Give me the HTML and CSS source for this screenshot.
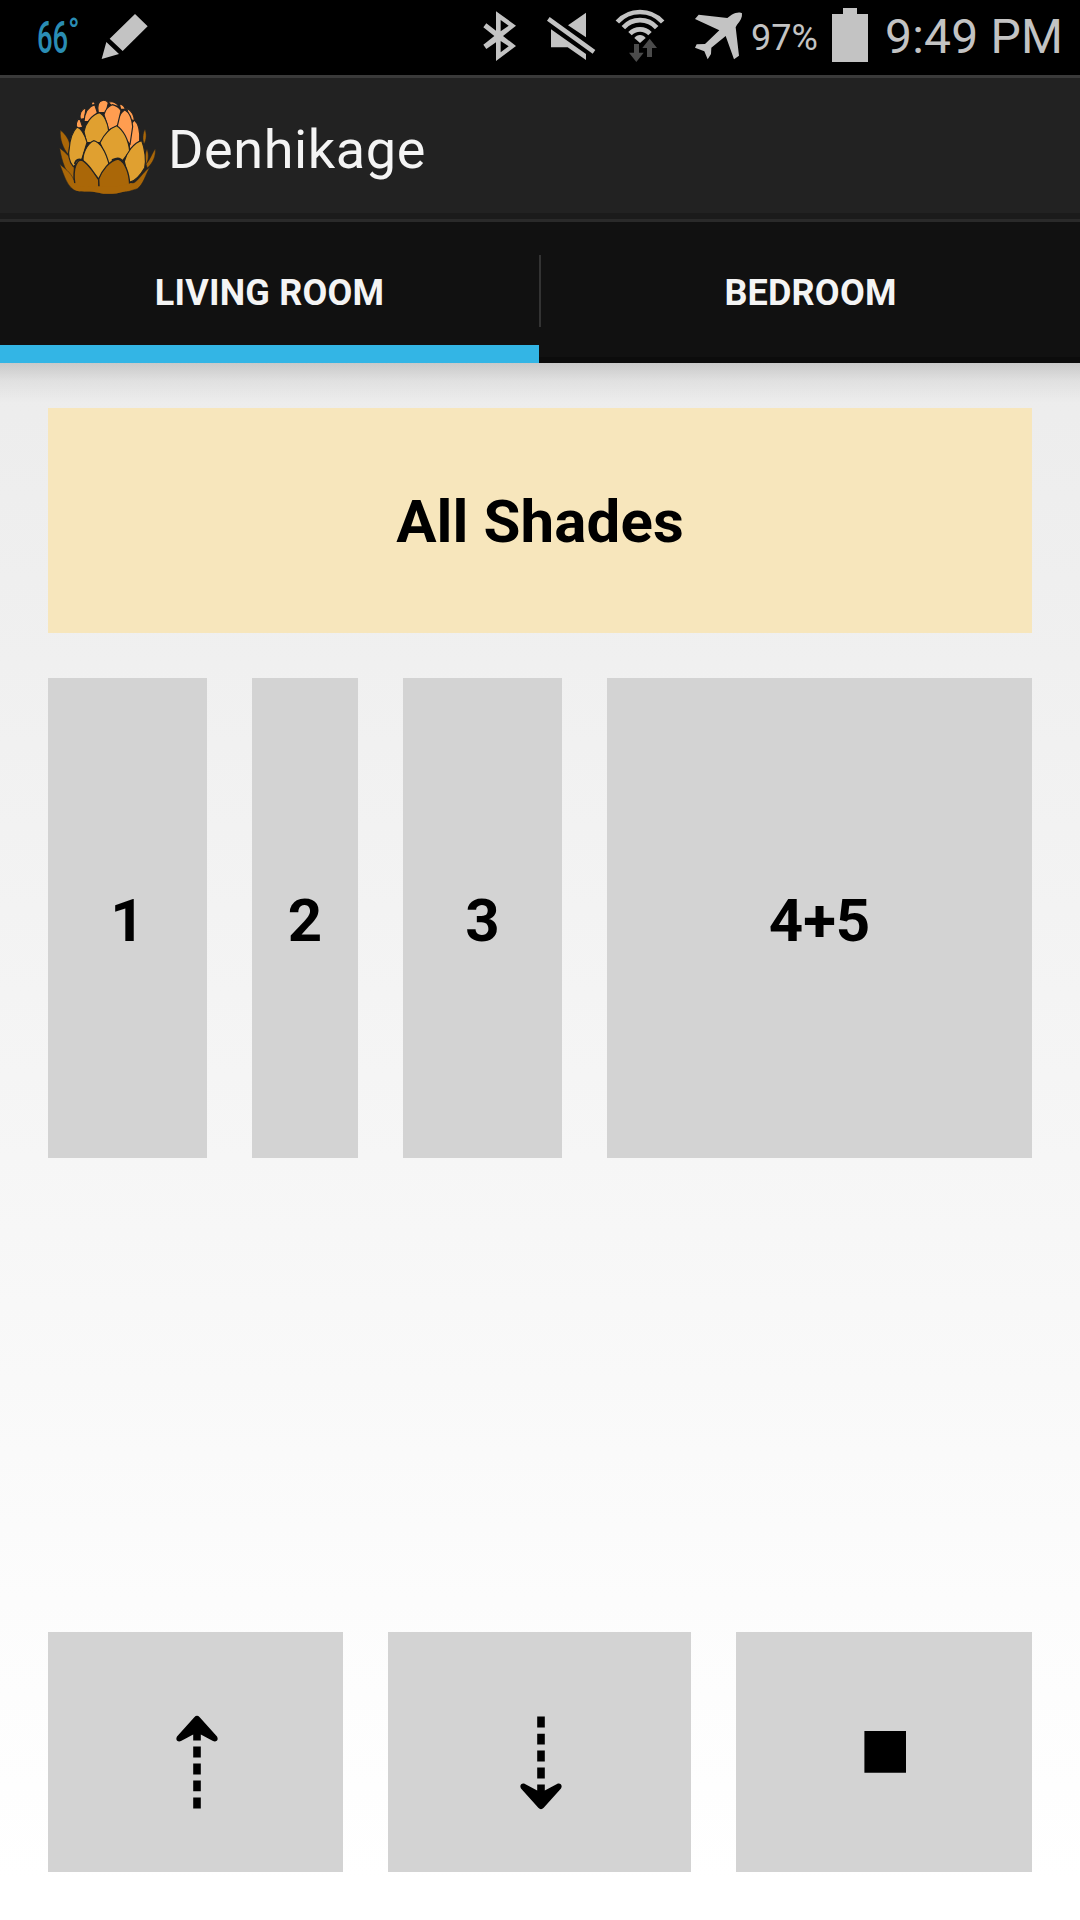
FILE: index.html
```html
<!DOCTYPE html>
<html lang="en">
<head>
<meta charset="utf-8">
<title>Denhikage</title>
<link rel="stylesheet" href="styles.css">
</head>
<body>
<div class="screen">
  <div class="status">
    <span class="temp">66</span><span class="degree">°</span>
    <svg class="pencil" viewBox="300 0 150 225"><path d="M405 42 443 79 368 153 329 116ZM319 126 357 162 305 177Z"/></svg>
    <svg class="bluetooth" viewBox="60 0 120 225"><path fill-rule="evenodd" d="M108 34 168 77 129 108 168 138 108 183V127L79 147 70 134 103 108 70 82 79 70 108 92ZM122 60V94L146 77ZM122 123V157L146 139Z"/></svg>
    <svg class="mute" viewBox="255 0 156 225"><path d="M378 38V112L324 76ZM273 88 378 162V180L323 142H273ZM269 51 406 150 398 161 261 62Z"/></svg>
    <svg class="wifi" viewBox="459 0 162 225">
      <g class="arcs"><path d="M472 66A92 92 0 0 1 608 66"/><path d="M490 83A67 67 0 0 1 590 83"/><path d="M510 101A41 41 0 0 1 570 101"/></g>
      <path d="M523 114A21 21 0 0 1 557 114L540 129Z"/>
      <path class="traffic" d="M522 132H537V158H551L529 186 507 158H522ZM569 116 591 144H576V171H561V144H547Z"/>
    </svg>
    <svg class="plane" viewBox="699 0 156 225"><path d="M846 40C847 52 842 63 831 74L827 82 837 167 822 178 797 108 754 143 753 162 743 178 733 154 705 143 710 133 735 132 778 91 705 57 716 44 802 54 815 44C828 36 842 36 846 40Z"/></svg>
    <span class="percent">97%</span>
    <svg class="battery" viewBox="0 0 36 75"><path d="M11 8H25V14H36V62H0V14H11Z"/></svg>
    <span class="clock">9:49 PM</span>
  </div>

  <header class="appbar">
    <svg class="logo" viewBox="50 48 312 300">
      <g class="leaf">
        <path d="M63 150C76 160 94 182 91 202L86 223C71 204 61 178 63 150Z"/>
        <path d="M61 204C76 216 104 238 104 262V304C80 280 67 244 61 204Z"/>
        <path d="M317 148C322 160 322 180 314 192 309 180 310 160 317 148Z"/>
        <path d="M323 207C329 222 328 242 320 253 315 240 317 220 323 207Z"/>
        <path d="M348 206C350 228 341 248 324 264L320 252C332 240 338 220 348 206Z"/>
        <path d="M61 252C76 266 92 274 104 300L268 316C300 306 305 280 332 262 318 284 312 314 294 326 275 332 270 334 250 336 228 343 195 343 178 338 155 332 130 337 112 332 84 326 74 284 61 252Z"/>
      </g>
      <g class="tip">
        <path d="M140 83C124 88 120 104 123 118L136 116Z"/>
        <path d="M121 115C110 122 109 136 113 145L130 142Z"/>
        <path d="M166 74C145 80 136 96 134 125H150L174 98Z"/>
        <path d="M156 67 164 65 168 73 158 76Z"/>
        <path d="M190 61C177 63 173 76 177 98H200L207 68C202 62 196 60 190 61Z"/>
        <path d="M207 67C218 63 230 68 238 78L220 80Z"/>
        <path d="M240 72C250 73 256 80 258 88L244 88Z"/>
        <path d="M262 84C276 92 285 106 285 123L270 116Z"/>
        <path d="M285 120C297 130 303 152 301 185L270 208V140Z"/>
        <path d="M256 89C269 96 278 115 280 140L272 194 232 142C232 116 242 99 256 89Z"/>
        <path d="M219 74C232 77 240 82 245 92L234 138 208 150 194 104C198 88 208 78 219 74Z"/>
      </g>
      <g class="petal">
        <path d="M180 98C194 104 205 126 208 152L182 188H142L134 155C138 130 157 105 180 98Z"/>
        <path d="M113 141C126 146 137 166 143 187L128 236 102 260C88 245 86 221 90 204 92 178 98 156 113 141Z"/>
        <path d="M232 137C251 149 268 178 271 214L248 244 210 256 182 188C193 165 210 145 232 137Z"/>
        <path d="M163 182C185 187 201 222 210 255L178 297 132 246C127 226 143 190 163 182Z"/>
        <path d="M307 182C317 208 321 242 316 263 303 286 287 303 270 307L255 244C262 218 283 188 307 182Z"/>
      </g>
      <g class="leaf front">
        <path d="M123 239C143 244 162 276 178 299L180 333 116 328C98 308 101 251 123 239Z"/>
        <path d="M237 237C257 246 270 278 271 314L258 334 180 336 178 297C188 272 210 241 237 237Z"/>
      </g>
      <path class="base" d="M108 308C125 328 155 318 180 319 210 321 250 320 274 309L295 312C285 330 265 334 250 336 228 343 195 343 178 338 155 332 130 337 112 332 103 330 97 323 92 315Z"/>
      <g class="vein"><path d="M107 250C110 240 118 236 126 240"/><path d="M220 240C232 234 244 235 250 245"/></g>
    </svg>
    <h1 class="title">Denhikage</h1>
  </header>

  <nav class="tabs">
    <a class="tab active"><span>LIVING ROOM</span></a>
    <i class="divider"></i>
    <a class="tab"><span>BEDROOM</span></a>
  </nav>

  <main class="content">
    <div class="tile all"><span class="label all-label">All Shades</span></div>
    <div class="shades">
      <div class="tile"><span class="label">1</span></div>
      <div class="tile"><span class="label">2</span></div>
      <div class="tile"><span class="label">3</span></div>
      <div class="tile"><span class="label">4+5</span></div>
    </div>
    <div class="controls">
      <div class="tile"><svg class="arrow" viewBox="0 0 44 96"><path d="M19.3 4.3Q22 1.4 24.7 4.3L42 23.5C44 27 41 29.5 38 28L25.8 21.5V27.5H18.2V21.5L6 28C3 29.5 0 27 2 23.5ZM18.2 33.5H25.8V44.5H18.2ZM18.2 50.5H25.8V61.5H18.2ZM18.2 67.5H25.8V78.3H18.2ZM18.2 84.5H25.8V95.5H18.2Z"/></svg></div>
      <div class="tile"><svg class="arrow down" viewBox="0 0 44 96"><path d="M19.3 4.3Q22 1.4 24.7 4.3L42 23.5C44 27 41 29.5 38 28L25.8 21.5V27.5H18.2V21.5L6 28C3 29.5 0 27 2 23.5ZM18.2 33.5H25.8V44.5H18.2ZM18.2 50.5H25.8V61.5H18.2ZM18.2 67.5H25.8V78.3H18.2ZM18.2 84.5H25.8V95.5H18.2Z"/></svg></div>
      <div class="tile"><svg class="stop" viewBox="0 0 42 42"><path d="M.4 0H42V41.7H.4Z"/></svg></div>
    </div>
  </main>
</div>
</body>
</html>
```
FILE: styles.css
```css
* { box-sizing: border-box; }
body { margin: 0; font-family: Roboto, sans-serif; background: #fff; }
svg { display: block; flex: none; }

.screen {
  width: 1080px;
  height: 1920px;
  display: flex;
  flex-direction: column;
  overflow: hidden;
  background: linear-gradient(#e8e8e8 0, #f6f6f6 1158px, #fcfcfc 1600px, #fff 1880px);
}

.status {
  height: 75px;
  flex: none;
  display: flex;
  background: #000;
  color: #c3c3c3;
  fill: #c3c3c3;
  white-space: nowrap;
}
.status svg { height: 75px; }
.temp, .degree { color: #2a8db4; transform-origin: 0 0; }
.temp { width: 31px; margin-left: 37px; font-size: 45px; line-height: 76px; font-weight: 500; transform: scaleX(.61); }
.degree { width: 12px; font-size: 37px; line-height: 64px; font-weight: 500; transform: scaleX(.82); }
.pencil { width: 50px; margin-left: 20px; }
.bluetooth { width: 40px; margin-left: 330px; }
.mute { width: 52px; margin-left: 25px; }
.wifi { width: 54px; margin-left: 16px; }
.arcs { fill: none; stroke: #c3c3c3; stroke-width: 14; }
.traffic { fill: #4b4b4b; }
.plane { width: 52px; margin-left: 26px; }
.percent { width: 81px; margin-left: 6px; font-size: 36px; line-height: 76px; }
.battery { width: 36px; }
.clock { margin-left: 17px; font-size: 48px; line-height: 73px; letter-spacing: .2px; }

.appbar {
  height: 147px;
  flex: none;
  display: flex;
  align-items: flex-start;
  padding: 18px 0 0 56px;
  background: linear-gradient(#1b1b1b, #1b1b1b) 0 135px / 100% 6px no-repeat, #222;
  border-top: 3px solid #3a3a3a;
  border-bottom: 3px solid #2a2a2a;
}
.logo { width: 104px; height: 100px; stroke: #222; stroke-width: 3.4; stroke-linejoin: round; }
.leaf { fill: #aa6708; }
.leaf > path { stroke-width: 1.5; }
.front > path { stroke-width: 4; }
.tip { fill: #ff9d50; }
.petal { fill: #e0a030; }
.base { fill: #aa6708; stroke: none; }
.vein { fill: none; stroke-width: 6; stroke-linecap: round; }
.title { margin: 22px 0 0 8px; color: #f4f4f4; font-size: 54px; line-height: 64px; font-weight: 400; letter-spacing: .6px; }

.tabs {
  height: 141px;
  flex: none;
  display: flex;
  background: linear-gradient(#0c0c0c, #0c0c0c) 0 100% / 100% 6px no-repeat, #111;
  color: #f4f4f4;
}
.tab { flex: 1; display: flex; justify-content: center; font-size: 36px; line-height: 42px; font-weight: 700; letter-spacing: .2px; padding-top: 50px; }
.active { border-bottom: 18px solid #33b5e5; }
.divider { width: 2px; height: 72px; margin-top: 33px; background: #333; }

.content {
  flex: 1;
  display: flex;
  flex-direction: column;
  padding: 45px 48px 48px;
  background: linear-gradient(rgba(0, 0, 0, .15), rgba(0, 0, 0, .05) 18px, transparent 40px);
}
.tile { display: flex; align-items: center; justify-content: center; background: #d3d3d3; }
.all { height: 225px; background: #f7e6bc; }
.label { font-size: 60px; line-height: 70px; font-weight: 700; padding-top: 6px; }
.all-label { padding-top: 2px; letter-spacing: .1px; }
.shades { display: grid; grid-template-columns: 159px 106px 159px 425px; gap: 45px; height: 480px; margin-top: 45px; }
.controls { display: grid; grid-template-columns: 295px 303px 296px; gap: 45px; height: 240px; margin-top: auto; }
.arrow { width: 44px; height: 96px; margin: 18px 0 0 2px; }
.down { margin-top: 24px; transform: rotate(180deg); }
.stop { width: 42px; height: 42px; margin-left: 2px; }
```
